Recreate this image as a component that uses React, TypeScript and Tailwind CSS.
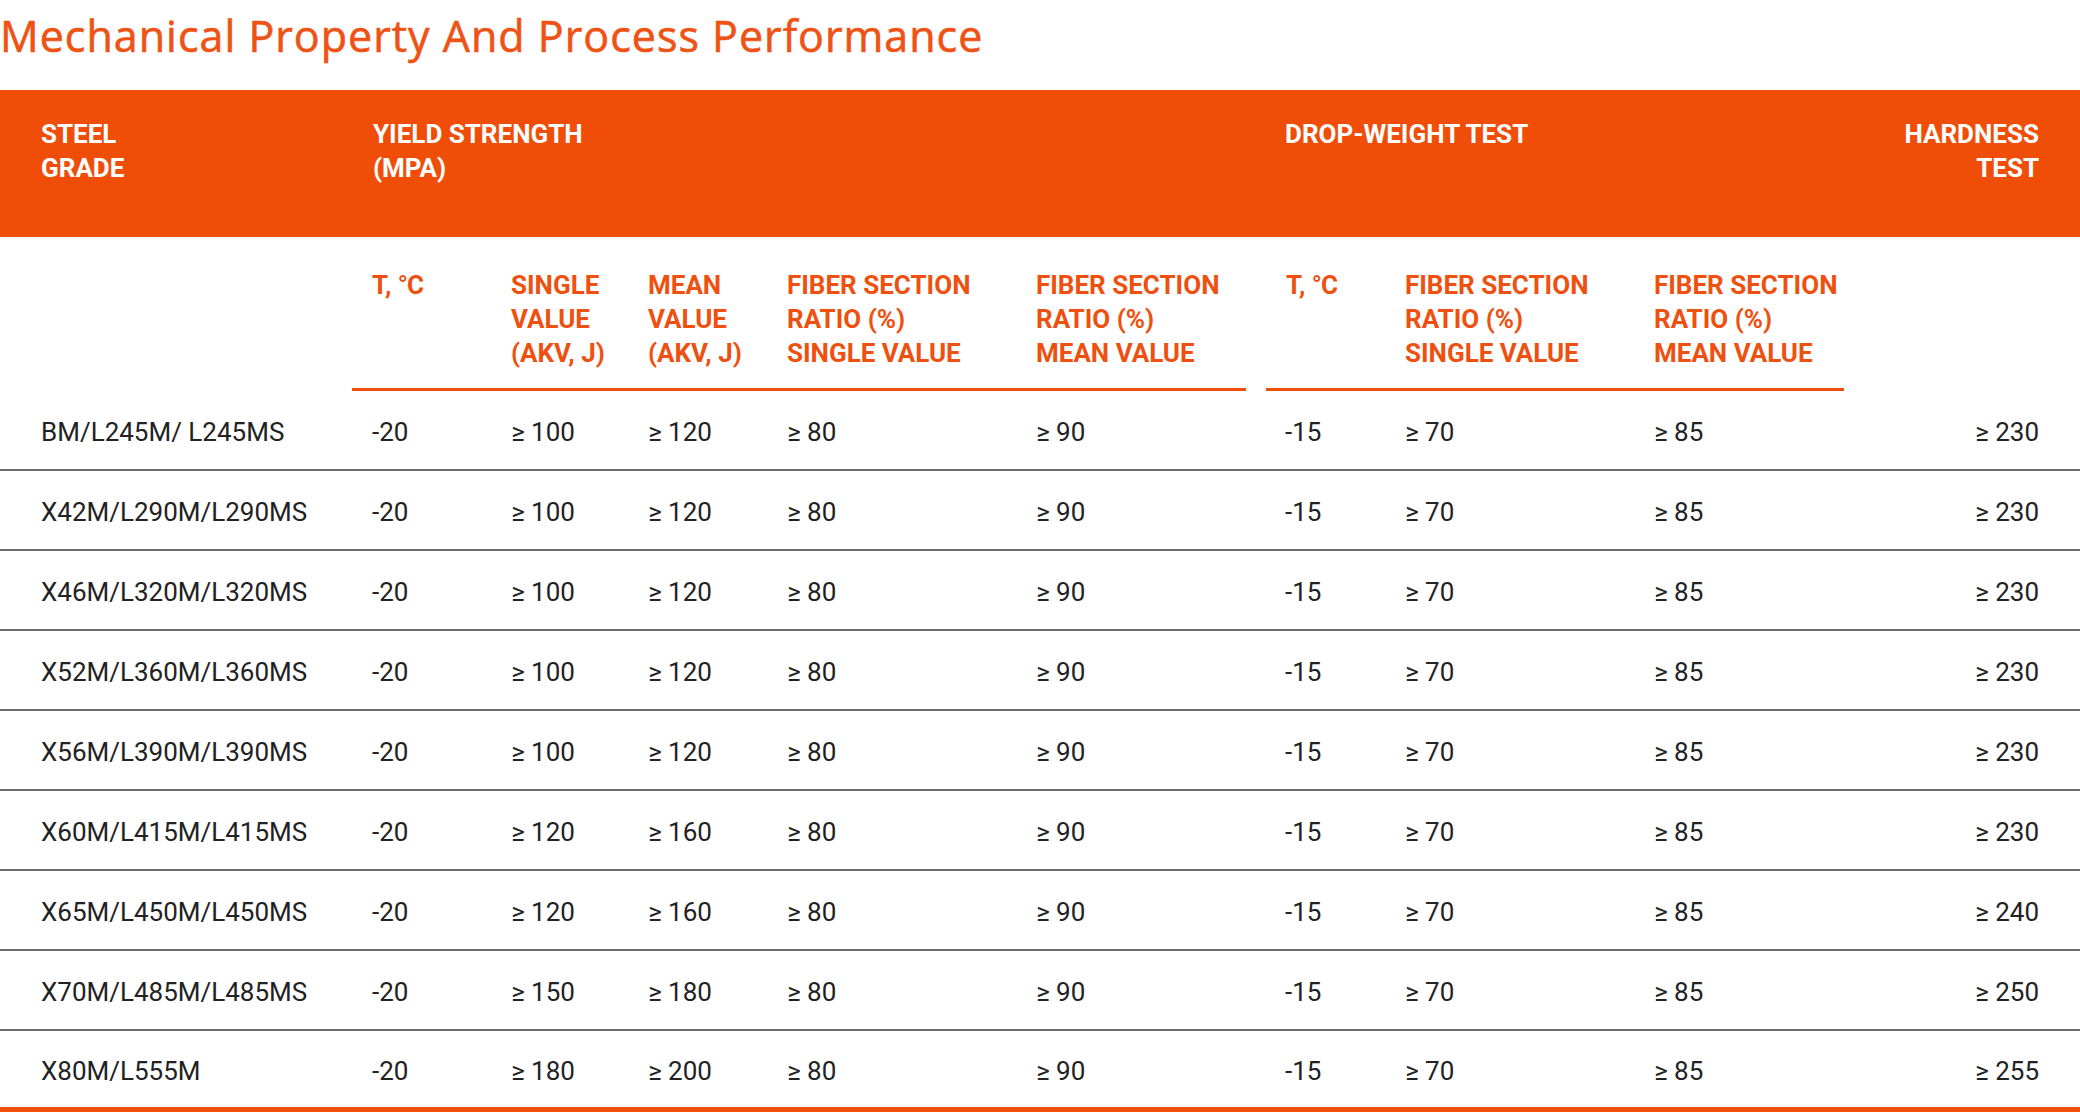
import React from "react";

const GRID =
  "grid grid-cols-[352px_139px_137px_139px_249px_230px_20px_119px_249px_210px_236px]";

type Row = {
  grade: string;
  t: string;
  single: string;
  mean: string;
  fs: string;
  fm: string;
  dt: string;
  dfs: string;
  dfm: string;
  hard: string;
};

const mk = (grade: string, single: string, mean: string, hard: string): Row => ({
  grade,
  t: "-20",
  single,
  mean,
  fs: "≥ 80",
  fm: "≥ 90",
  dt: "-15",
  dfs: "≥ 70",
  dfm: "≥ 85",
  hard,
});

const rows: Row[] = [
  mk("BM/L245M/ L245MS", "≥ 100", "≥ 120", "≥ 230"),
  mk("X42M/L290M/L290MS", "≥ 100", "≥ 120", "≥ 230"),
  mk("X46M/L320M/L320MS", "≥ 100", "≥ 120", "≥ 230"),
  mk("X52M/L360M/L360MS", "≥ 100", "≥ 120", "≥ 230"),
  mk("X56M/L390M/L390MS", "≥ 100", "≥ 120", "≥ 230"),
  mk("X60M/L415M/L415MS", "≥ 120", "≥ 160", "≥ 230"),
  mk("X65M/L450M/L450MS", "≥ 120", "≥ 160", "≥ 240"),
  mk("X70M/L485M/L485MS", "≥ 150", "≥ 180", "≥ 250"),
  mk("X80M/L555M", "≥ 180", "≥ 200", "≥ 255"),
];

function SubHead({ lines, deg }: { lines?: string[]; deg?: boolean }) {
  return (
    <div className="border-b-[3px] border-[#f04e0a] pl-[20px] pt-[31px] pb-[18px] text-[26px] font-bold leading-[34px] text-[#ee5010]">
      {deg ? (
        <div className="whitespace-nowrap">
          T, <span className="tracking-[-1px]">°</span>C
        </div>
      ) : (
        (lines || []).map((l, i) => (
          <div key={i} className="whitespace-nowrap">
            {l}
          </div>
        ))
      )}
    </div>
  );
}

export default function App() {
  return (
    <div className="w-[2080px] h-[1112px] overflow-hidden bg-white font-['Roboto',sans-serif]">
      <div className="h-[90px] pt-[11px]">
        <h1 className="font-['Open_Sans',sans-serif] text-[43px] font-normal tracking-[1px] leading-[50px] text-[#ee5214] [-webkit-text-stroke-width:0.6px] whitespace-nowrap">
          Mechanical Property And Process Performance
        </h1>
      </div>

      {/* Orange header */}
      <div className={GRID + " h-[147px] bg-[#f04e08] text-white text-[26px] font-bold leading-[34px] pt-[27px]"}>
        <div className="pl-[41px]">
          <div>STEEL</div>
          <div>GRADE</div>
        </div>
        <div className="col-span-5 pl-[21px]">
          <div>YIELD STRENGTH</div>
          <div>(MPA)</div>
        </div>
        <div />
        <div className="col-span-3 pl-[19px]">
          <div>DROP-WEIGHT TEST</div>
        </div>
        <div className="pr-[41px] text-right">
          <div>HARDNESS</div>
          <div>TEST</div>
        </div>
      </div>

      {/* Sub header */}
      <div className={GRID}>
        <div />
        <SubHead deg />
        <SubHead lines={["SINGLE", "VALUE", "(AKV, J)"]} />
        <SubHead lines={["MEAN", "VALUE", "(AKV, J)"]} />
        <SubHead lines={["FIBER SECTION", "RATIO (%)", "SINGLE VALUE"]} />
        <SubHead lines={["FIBER SECTION", "RATIO (%)", "MEAN VALUE"]} />
        <div />
        <SubHead deg />
        <SubHead lines={["FIBER SECTION", "RATIO (%)", "SINGLE VALUE"]} />
        <SubHead lines={["FIBER SECTION", "RATIO (%)", "MEAN VALUE"]} />
        <div />
      </div>

      {/* Data rows */}
      {rows.map((r, i) => {
        const last = i === rows.length - 1;
        return (
          <div
            key={i}
            className={
              GRID +
              " items-center pt-[4px] text-[26px] text-[#222222] " +
              (last
                ? "h-[82px] border-b-[6px] border-[#f04e0a]"
                : "h-[80px] border-b-2 border-[#6b6b6b]")
            }
          >
            <div className="pl-[41px] whitespace-nowrap">{r.grade}</div>
            <div className="pl-[20px]">{r.t}</div>
            <div className="pl-[20px]">{r.single}</div>
            <div className="pl-[20px]">{r.mean}</div>
            <div className="pl-[20px]">{r.fs}</div>
            <div className="pl-[20px]">{r.fm}</div>
            <div />
            <div className="pl-[19px]">{r.dt}</div>
            <div className="pl-[20px]">{r.dfs}</div>
            <div className="pl-[20px]">{r.dfm}</div>
            <div className="pr-[41px] text-right">{r.hard}</div>
          </div>
        );
      })}
    </div>
  );
}
